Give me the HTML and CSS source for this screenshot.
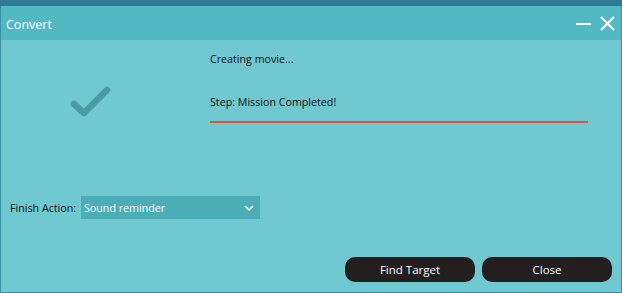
FILE: index.html
```html
<!DOCTYPE html>
<html>
<head>
<meta charset="utf-8">
<link rel="stylesheet" href="styles.css">
</head>
<body>
<div class="window">
  <div class="topstrip"></div>
  <div class="titlebar">
    <span class="title">Convert</span>
    <div class="controls">
      <svg class="ctl" width="16" height="16" viewBox="0 0 16 16"><line x1="0" y1="8" x2="15" y2="8" stroke="#fff" stroke-width="2"/></svg>
      <svg class="ctl" width="16" height="16" viewBox="0 0 16 16"><path d="M1 1 L14 14 M14 1 L1 14" stroke="#fff" stroke-width="2" fill="none"/></svg>
    </div>
  </div>
  <div class="body">
    <div class="top">
      <div class="iconcol">
        <svg width="44" height="36" viewBox="0 0 44 36"><path d="M4 20 L14 29 L37 6" stroke="#4a9ba3" stroke-width="6.5" stroke-linecap="round" stroke-linejoin="round" fill="none"/></svg>
      </div>
      <div class="status">
        <div class="line1">Creating movie...</div>
        <div class="line2">Step: Mission Completed!</div>
        <div class="progress"></div>
      </div>
    </div>
    <div class="action">
      <span class="label">Finish Action:</span>
      <div class="select">
        <span>Sound reminder</span>
        <svg width="10" height="6" viewBox="0 0 10 6"><path d="M1 1 L5 5 L9 1" stroke="#fff" stroke-width="1.6" fill="none"/></svg>
      </div>
    </div>
    <div class="buttons">
      <button class="btn">Find Target</button>
      <button class="btn">Close</button>
    </div>
  </div>
</div>
</body>
</html>
```
FILE: styles.css
```css
* { box-sizing: border-box; }
html, body { margin: 0; padding: 0; }
body { width: 622px; height: 293px; overflow: hidden; font-family: "Open Sans", "Noto Sans", sans-serif; }
.window {
  width: 622px; height: 293px;
  background: #70c8d0;
  border-left: 1px solid #3d8fa5;
  border-right: 1px solid #3d8fa5;
  border-bottom: 1px solid #3d8fa5;
  display: flex; flex-direction: column;
}
.topstrip { height: 6px; background: #2e7b98; margin: 0 -1px; }
.titlebar {
  height: 34px; background: #52b8c4;
  display: flex; align-items: center; justify-content: space-between;
  padding: 0 5px 0 5px;
}
.title { color: #fff; font-size: 12.5px; margin-top: 2px; }
.controls { display: flex; gap: 8px; align-items: center; margin-top: 2px; }
.ctl { display: block; }
.body { flex: 1; display: flex; flex-direction: column; }
.top { display: flex; height: 150px; }
.iconcol { width: 209px; padding: 44px 0 0 69px; }
.iconcol svg { display: block; }
.status { padding-top: 11px; font-size: 10.7px; color: #111; }
.line1 { height: 16px; line-height: 16px; }
.line2 { margin-top: 27px; height: 16px; line-height: 16px; }
.progress { margin-top: 11px; width: 378px; height: 2px; background: #e0503c; }
.action { display: flex; align-items: center; padding-left: 9px; height: 23px; margin-top: 6px; }
.label { font-size: 10.7px; color: #111; width: 71px; }
.select {
  width: 179px; height: 23px; background: #4badb5;
  display: flex; align-items: center; justify-content: space-between;
  padding: 0 6px 0 3px; color: #fff; font-size: 10.7px;
}
.select svg { display: block; }
.buttons { display: flex; justify-content: flex-end; gap: 7px; padding-right: 9px; margin-top: 38px; }
.btn {
  width: 130px; height: 25px; border: none; border-radius: 10px;
  background: #231f20; color: #fff; font-family: inherit; font-size: 11.5px; padding: 0;
}
```
